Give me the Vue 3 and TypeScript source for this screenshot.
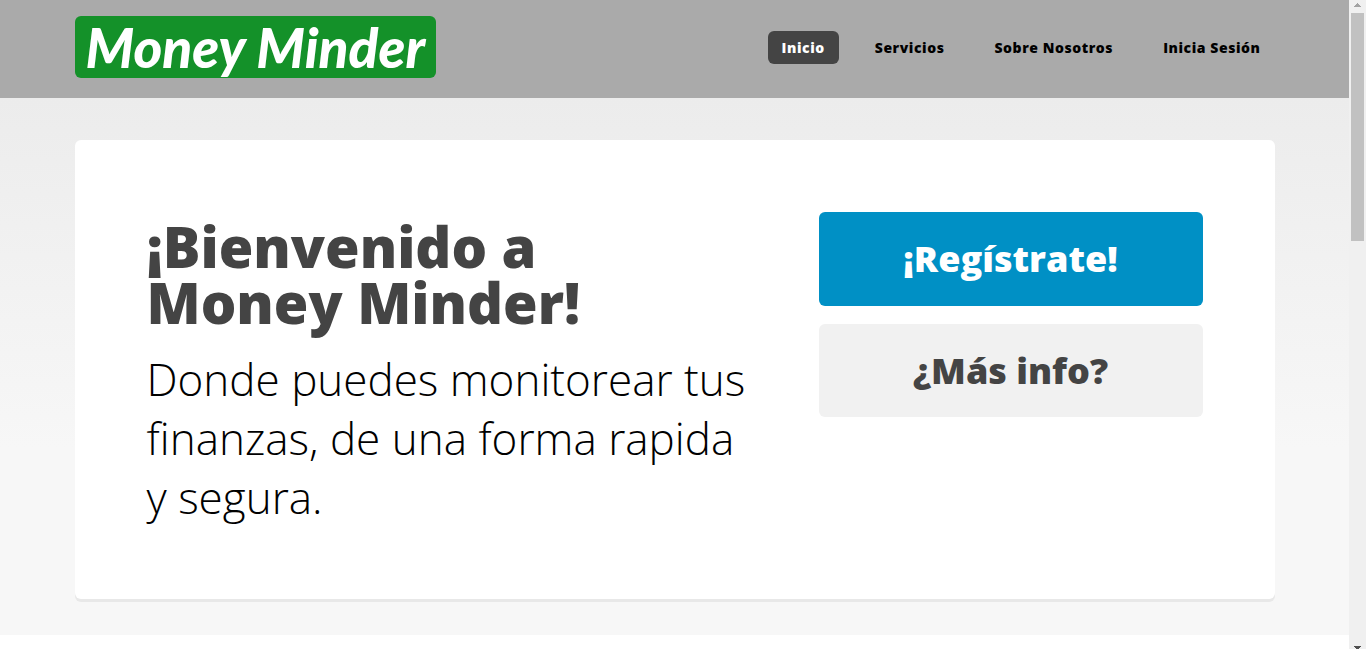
<script setup lang="ts">
interface NavItem {
  label: string
  active?: boolean
}

const navItems: NavItem[] = [
  { label: 'Inicio', active: true },
  { label: 'Servicios' },
  { label: 'Sobre Nosotros' },
  { label: 'Inicia Sesión' },
]
</script>

<template>
  <div class="viewport">
    <div class="page">
      <header class="header">
        <div class="container header-inner">
          <h1 class="logo"><a href="#">Money Minder</a></h1>
          <nav class="nav" aria-label="Principal">
            <ul>
              <li v-for="item in navItems" :key="item.label">
                <a href="#" :class="{ current: item.active }">{{ item.label }}</a>
              </li>
            </ul>
          </nav>
        </div>
      </header>

      <main class="banner-wrapper">
        <section class="container banner">
          <div class="intro">
            <h2>¡Bienvenido a<br />Money Minder!</h2>
            <p>Donde puedes monitorear tus finanzas, de una forma rapida y segura.</p>
          </div>
          <ul class="actions">
            <li><a href="#" class="button">¡Regístrate!</a></li>
            <li><a href="#" class="button alt">¿Más info?</a></li>
          </ul>
        </section>
      </main>
    </div>

    <div class="scrollbar" aria-hidden="true">
      <svg class="arrow" width="7" height="4" viewBox="0 0 7 4" shape-rendering="crispEdges">
        <path d="M3 0h1v1h1v1h1v1h1v1H0V3h1V2h1V1h1z" fill="#a3a3a3" />
      </svg>
      <div class="thumb"></div>
      <svg class="arrow down" width="7" height="3" viewBox="0 0 7 3" shape-rendering="crispEdges">
        <path d="M0 0h7v1H6v1H5v1H2V2H1V1H0z" fill="#505050" />
      </svg>
    </div>
  </div>
</template>

<style>
body {
  margin: 0;
  background: #fff;
}
</style>

<style scoped>
.viewport {
  display: flex;
  height: 100vh;
  overflow: hidden;
  font-family: 'Open Sans', sans-serif;
  color: #000;
}

.page {
  flex: 1;
  min-width: 0;
}

.container {
  box-sizing: border-box;
  width: calc(100% - 64px);
  max-width: 1200px;
  margin: 0 auto;
}

.header {
  background: #aaa;
}

.header-inner {
  display: flex;
  justify-content: space-between;
  align-items: flex-start;
  padding: 16px 0 20px;
}

.logo {
  margin: 0;
  padding: 0 11px;
  border-radius: 6px;
  background: #149129;
  font-family: Lato, sans-serif;
  font-size: 55px;
  font-weight: 900;
  font-style: italic;
  line-height: 62px;
}

.logo a {
  color: #fff;
  text-decoration: none;
}

.nav {
  padding-top: 15px;
}

.nav ul {
  display: flex;
  gap: 22px;
  margin: 0;
  padding: 0;
  list-style: none;
}

.nav a {
  display: block;
  padding: 0 14px;
  border-radius: 6px;
  color: #000;
  font-size: 14px;
  font-weight: 800;
  letter-spacing: 0.04em;
  line-height: 33px;
  text-decoration: none;
}

.nav a.current {
  background: #444;
  color: #fff;
}

.banner-wrapper {
  padding: 42px 0 36px;
  background: linear-gradient(#ececec, #f7f7f7 350px);
}

.banner {
  display: grid;
  grid-template-columns: 7fr 4fr;
  padding: 72px;
  border-radius: 6px;
  background: #fff;
  box-shadow: 0 3px 0 #e8e8e8;
}

.intro {
  padding: 6px 64px 0 0;
}

.intro h2 {
  margin: 0 0 20px;
  color: #444;
  font-size: 56px;
  font-weight: 800;
  line-height: 56px;
}

.intro p {
  margin: 0;
  font-size: 44px;
  font-weight: 300;
  line-height: 59px;
}

.actions {
  display: flex;
  flex-direction: column;
  gap: 18px;
  margin: 0;
  padding: 0;
  list-style: none;
}

.button {
  display: block;
  border-radius: 6px;
  background: #0090c5;
  color: #fff;
  font-size: 36px;
  font-weight: 800;
  line-height: 94px;
  text-align: center;
  text-decoration: none;
}

.button.alt {
  background: #f1f1f1;
  color: #444;
  line-height: 93px;
}

.scrollbar {
  display: flex;
  flex-direction: column;
  box-sizing: border-box;
  width: 17px;
  padding: 3px 2px 0;
  background: #f0f0f0;
}

.arrow {
  margin: 0 auto 6px;
}

.arrow.down {
  margin: auto auto 0;
}

.thumb {
  height: 228px;
  background: #c1c1c1;
}
</style>
